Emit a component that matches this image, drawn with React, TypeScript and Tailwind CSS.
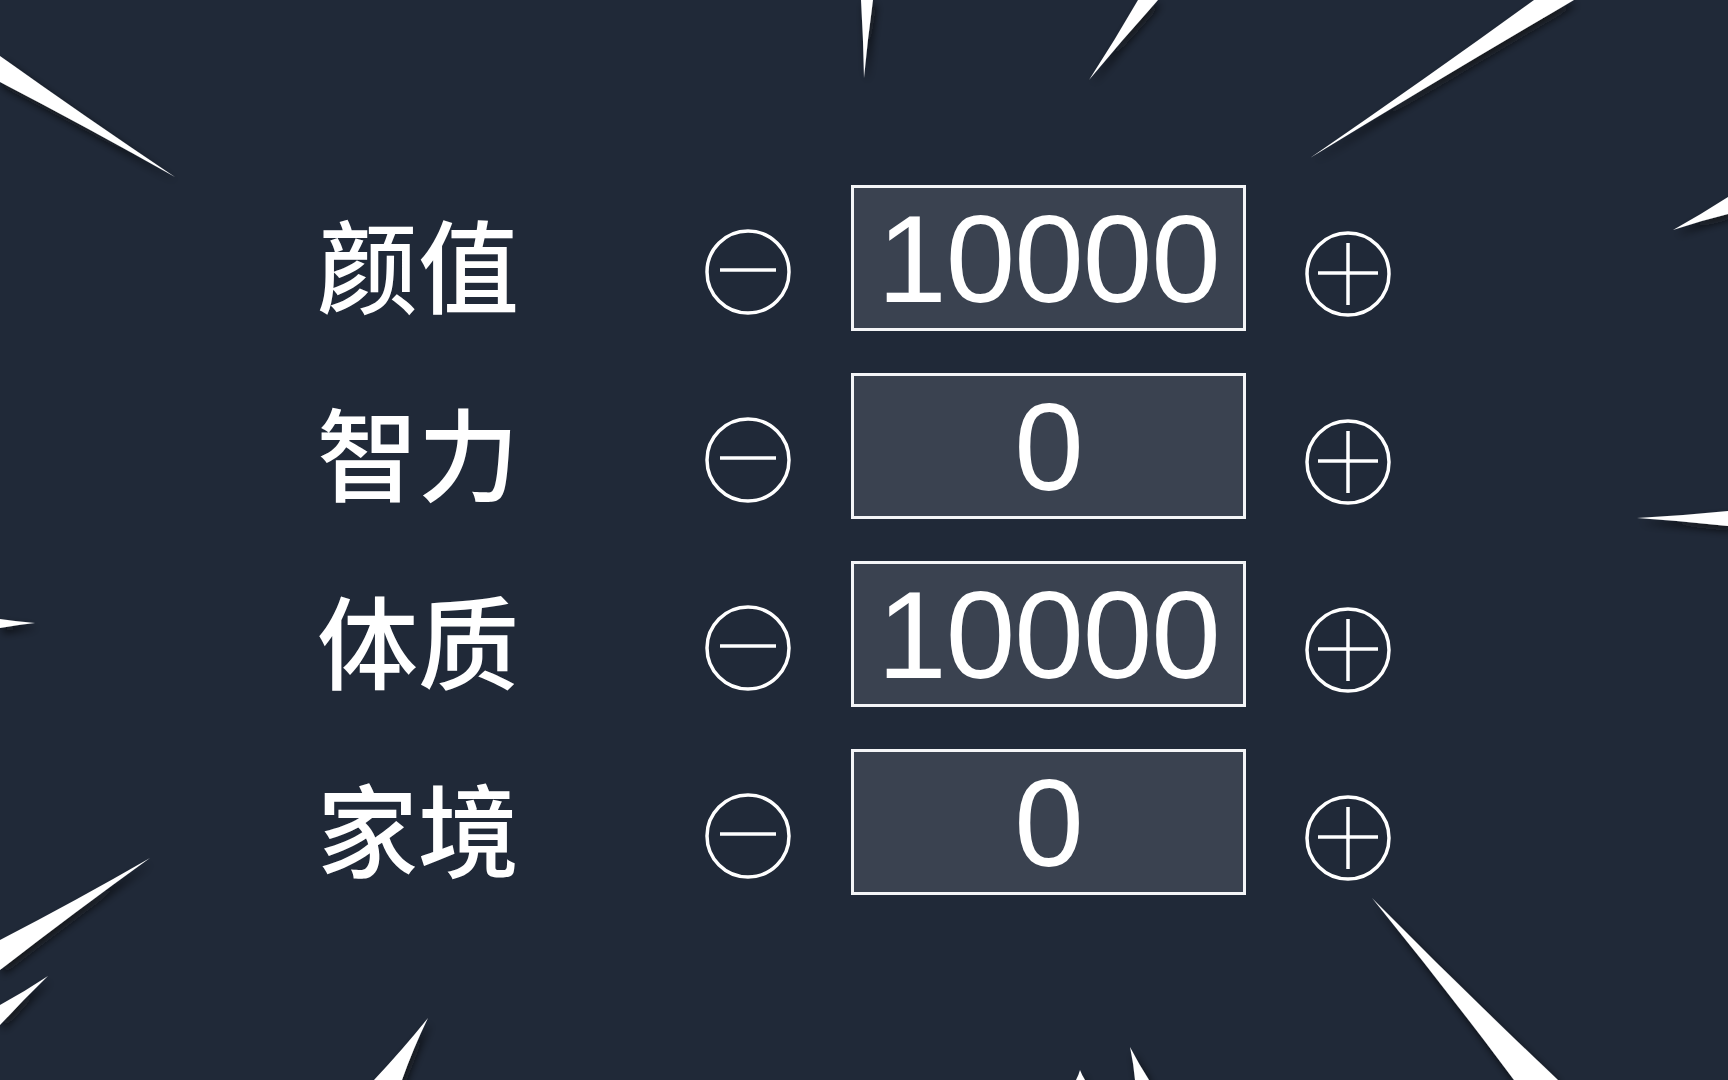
const stats = [
  { label: "颜值", value: 10000 },
  { label: "智力", value: 0 },
  { label: "体质", value: 10000 },
  { label: "家境", value: 0 },
];

type Pt = [number, number];

// burst rays around the edges: [base A, base B, tip]
const rays: Pt[][] = [
  [[0, 56], [0, 82], [175, 177]],
  [[861, 0], [873, 0], [864, 78]],
  [[1138, 0], [1158, 0], [1089, 80]],
  [[1534, 0], [1574, 0], [1310, 158]],
  [[1728, 197], [1728, 214], [1673, 230]],
  [[1728, 511], [1728, 526], [1637, 518]],
  [[0, 619], [0, 628], [35, 623]],
  [[0, 940], [0, 970], [150, 858]],
  [[0, 1005], [0, 1025], [48, 976]],
  [[374, 1080], [402, 1080], [428, 1018]],
  [[1076, 1080], [1085, 1080], [1080, 1070]],
  [[1135, 1080], [1149, 1080], [1130, 1047]],
  [[1514, 1080], [1558, 1080], [1372, 898]],
];

// tapered spike with slightly concave sides
const rayPath = ([a, b, t]: Pt[]) => {
  const mid: Pt = [(a[0] + b[0]) / 2, (a[1] + b[1]) / 2];
  const ctrl = (p: Pt): Pt => {
    const x = p[0] + (t[0] - p[0]) * 0.5;
    const y = p[1] + (t[1] - p[1]) * 0.5;
    const cx = mid[0] + (t[0] - mid[0]) * 0.5;
    const cy = mid[1] + (t[1] - mid[1]) * 0.5;
    return [x + (cx - x) * 0.3, y + (cy - y) * 0.3];
  };
  const ca = ctrl(a);
  const cb = ctrl(b);
  return `M${a[0]},${a[1]} Q${ca[0]},${ca[1]} ${t[0]},${t[1]} Q${cb[0]},${cb[1]} ${b[0]},${b[1]} Z`;
};

const Burst = () => (
  <svg
    className="absolute inset-0 w-full h-full pointer-events-none"
    viewBox="0 0 1728 1080"
    preserveAspectRatio="none"
  >
    <defs>
      <filter id="ray-shadow" x="-20%" y="-20%" width="140%" height="140%">
        <feDropShadow dx="3" dy="5" stdDeviation="4" floodColor="#0b0f17" floodOpacity="0.75" />
      </filter>
    </defs>
    <g filter="url(#ray-shadow)" fill="#ffffff">
      {rays.map((r, i) => (
        <path key={i} d={rayPath(r)} />
      ))}
    </g>
  </svg>
);

const MinusIcon = () => (
  <svg width="88" height="88" viewBox="0 0 88 88" fill="none" stroke="white" strokeWidth="3.5">
    <circle cx="44" cy="44" r="41" />
    <line x1="16" y1="42" x2="72" y2="42" />
  </svg>
);

const PlusIcon = () => (
  <svg width="88" height="88" viewBox="0 0 88 88" fill="none" stroke="white" strokeWidth="3.5">
    <circle cx="44" cy="44" r="41" />
    <line x1="14" y1="43" x2="74" y2="43" />
    <line x1="44" y1="13" x2="44" y2="75" />
  </svg>
);

export default function App() {
  return (
    <div className="relative w-full h-[1080px] overflow-hidden bg-[#202938]">
      <Burst />
      <div className="relative flex flex-col gap-[42px] pl-[317px] pt-[185px]">
        {stats.map((s) => (
          <div key={s.label} className="flex items-center h-[146px]">
            <div
              className="w-[387px] mt-[8px] text-[101px] font-medium leading-none text-white"
              style={{ fontFamily: '"Noto Sans CJK SC", "Noto Sans", sans-serif' }}
            >
              {s.label}
            </div>
            <button className="mt-[28px]">
              <MinusIcon />
            </button>
            <div className="ml-[59px] w-[395px] h-[146px] border-[3px] border-[#f4f5f7] bg-[#3a4250] flex items-center justify-center">
              <span
                className="text-[125px] leading-none tracking-[-1px] text-white"
                style={{ fontFamily: '"Liberation Sans", Arial, sans-serif' }}
              >
                {s.value}
              </span>
            </div>
            <button className="ml-[58px] mt-[32px]">
              <PlusIcon />
            </button>
          </div>
        ))}
      </div>
    </div>
  );
}
